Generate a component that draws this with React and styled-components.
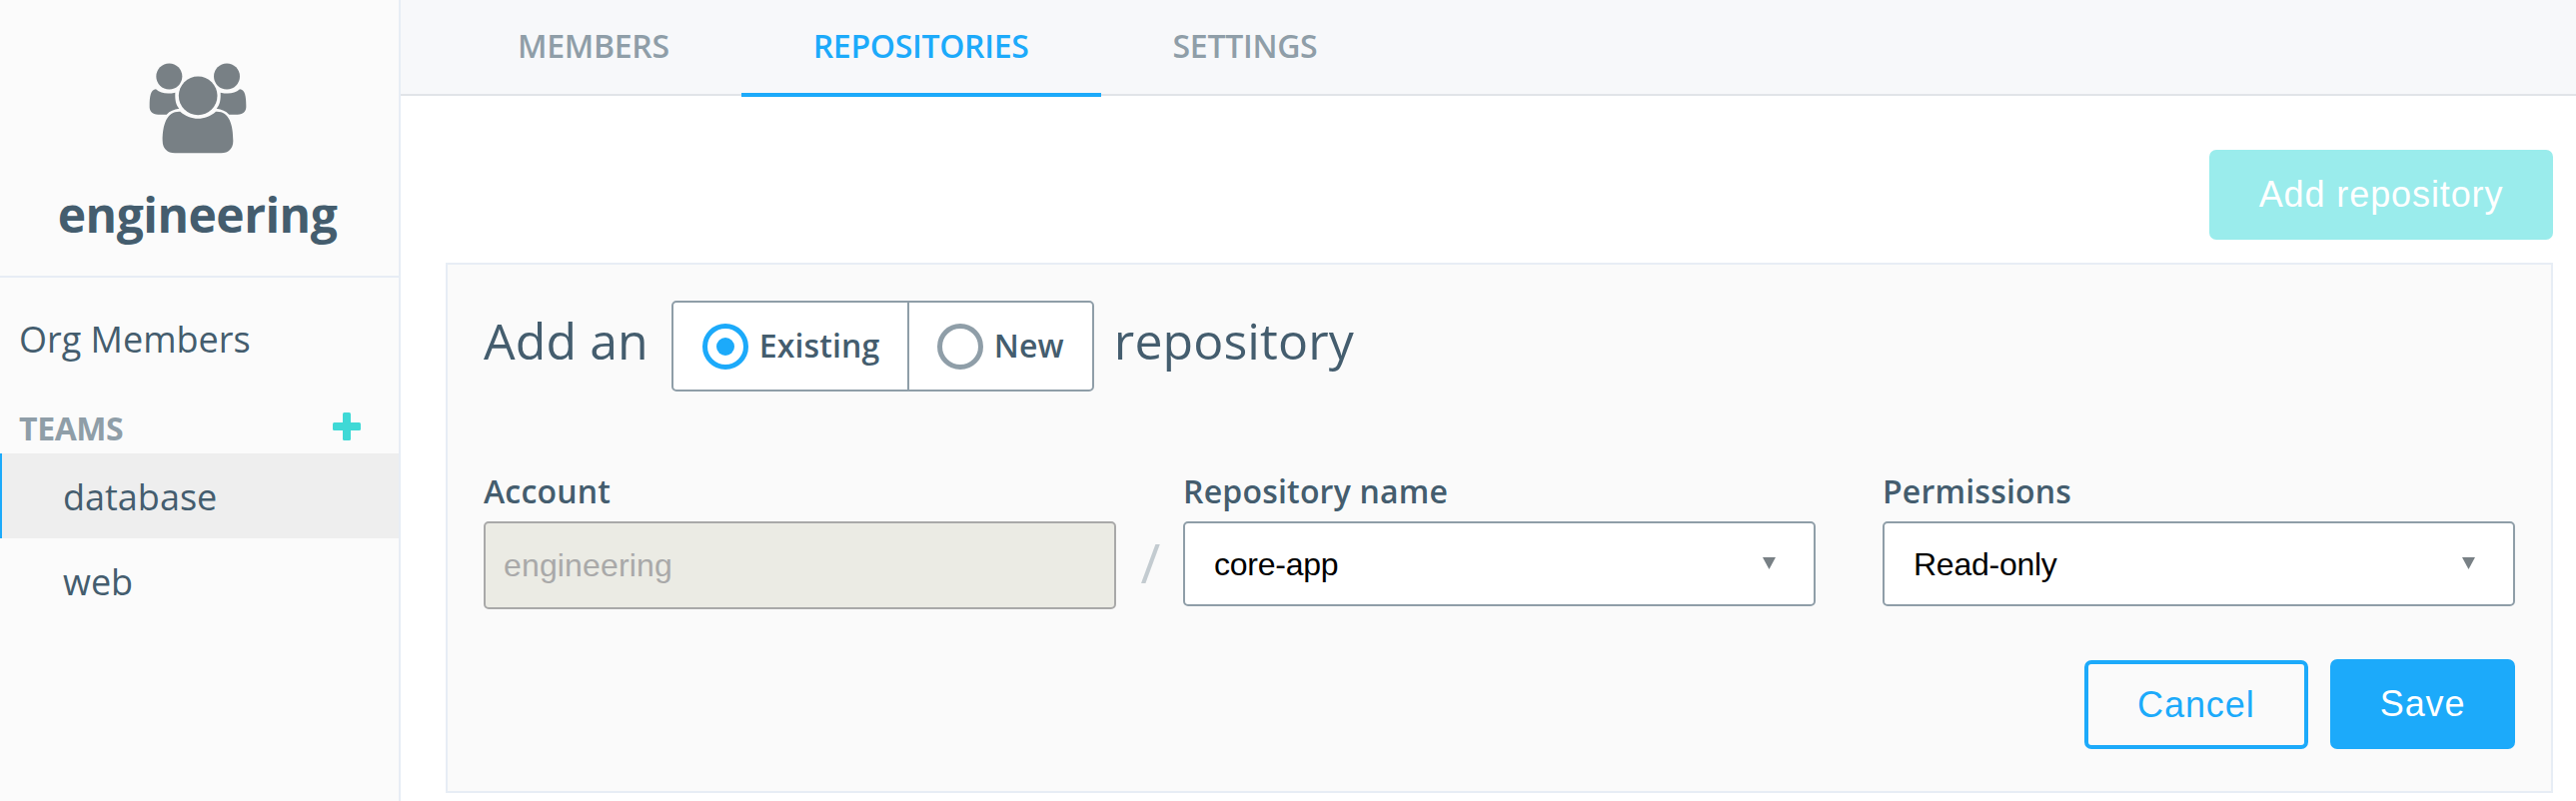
import React, { useState } from "react";
import styled, { createGlobalStyle } from "styled-components";

const GlobalStyle = createGlobalStyle`
  *, *::before, *::after { box-sizing: border-box; }
  body {
    margin: 0;
    background: #fff;
    color: #445d6e;
    font-family: "Open Sans", "Noto Sans", sans-serif;
  }
  button, input { margin: 0; }
`;

const Page = styled.div`
  display: flex;
  height: 802px;
  overflow: hidden;
`;

const Sidebar = styled.aside`
  flex: none;
  width: 401px;
  background: #fbfbfb;
  border-right: 2px solid #e7edf5;
`;

const OrgHeader = styled.header`
  display: flex;
  flex-direction: column;
  align-items: center;
  height: 278px;
  padding: 63px 3px 0 0;
  border-bottom: 2px solid #e7edf5;
`;

const OrgName = styled.h1`
  margin: 27px 0 0;
  padding-right: 1px;
  font-size: 48px;
  line-height: 68px;
  font-weight: 700;
  letter-spacing: -0.5px;
`;

const OrgLink = styled.a`
  display: block;
  margin-top: 37px;
  padding-left: 19px;
  font-size: 36px;
  line-height: 50px;
`;

const TeamsHeading = styled.div`
  display: flex;
  align-items: center;
  justify-content: space-between;
  height: 50px;
  margin-top: 39px;
  padding: 0 38px 0 19px;
  color: #8f9ea8;
  font-size: 32px;
  font-weight: 700;
  line-height: 50px;
  letter-spacing: -0.4px;
`;

const AddTeam = styled.svg`
  display: block;
  width: 28px;
  height: 28px;
  margin-top: -4px;
  fill: #3fd9d6;
`;

const TeamLink = styled.a`
  display: block;
  height: 85px;
  padding-left: 61px;
  border-left: 2px solid ${(p) => (p.$active ? "#1caafa" : "transparent")};
  background: ${(p) => (p.$active ? "#eee" : "transparent")};
  font-size: 36px;
  line-height: 88px;
`;

const Main = styled.main`
  flex: 1;
  min-width: 0;
`;

const Tabs = styled.nav`
  display: flex;
  height: 96px;
  padding-left: 45px;
  background: #f7f8fa;
  border-bottom: 2px solid #e1e4e8;
`;

const Tab = styled.a`
  height: 97px;
  padding: 0 72px;
  border-bottom: 4px solid ${(p) => (p.$active ? "#1caafa" : "transparent")};
  color: ${(p) => (p.$active ? "#1caafa" : "#8f9ea8")};
  font-size: 32px;
  line-height: 92px;
  font-weight: 600;
  letter-spacing: -0.3px;
`;

const Content = styled.div`
  padding: 54px 23px 0 45px;
`;

const Actions = styled.div`
  display: flex;
  justify-content: flex-end;
  align-items: flex-end;
  gap: 22px;
`;

const Button = styled.button`
  height: ${(p) => (p.$outlined ? 89 : 90)}px;
  padding: 0 49.6px;
  border: ${(p) => (p.$outlined ? "4px solid #1caafa" : "0")};
  border-radius: 7px;
  background: ${(p) => (p.$outlined ? "transparent" : p.$muted ? "#9aecec" : "#1caafa")};
  color: ${(p) => (p.$outlined ? "#1caafa" : "#fff")};
  font: 36px "Liberation Sans", Arial, sans-serif;
  letter-spacing: 0.9px;
`;

const Panel = styled.section`
  height: 531px;
  margin-top: 23px;
  padding: 36px 36px 0;
  border: 2px solid #e7edf5;
  background: #fafafa;
`;

const Sentence = styled.div`
  display: flex;
  align-items: flex-start;
  height: 170px;
  font-size: 50px;
  line-height: 80px;
  letter-spacing: 0.1px;
`;

const Choices = styled.div`
  display: flex;
  height: 91px;
  margin: 0 20px 0 23px;
  border: 2px solid #8f9ea8;
  border-radius: 5px;
  background: #fff;
`;

const Choice = styled.label`
  display: flex;
  align-items: center;
  gap: 11px;
  width: ${(p) => p.$width}px;
  padding: 0 0 2px 29px;
  font-size: 32px;
  line-height: 85px;
  font-weight: 600;

  & + & {
    padding-left: 28px;
    border-left: 2px solid #8f9ea8;
  }
`;

const Radio = styled.span`
  display: flex;
  align-items: center;
  justify-content: center;
  width: 46px;
  height: 46px;
  margin-top: 3px;
  border: 5px solid ${(p) => (p.$checked ? "#1caafa" : "#8f9ea8")};
  border-radius: 50%;

  &::after {
    content: "";
    width: 18px;
    height: 18px;
    border-radius: 50%;
    background: ${(p) => (p.$checked ? "#1caafa" : "transparent")};
  }
`;

const Fields = styled.div`
  display: grid;
  grid-template-columns: 633px 67px 633px 67px 633px;
  height: 189px;
`;

const Field = styled.div`
  display: flex;
  flex-direction: column;
`;

const FieldLabel = styled.label`
  height: 51px;
  font-size: 32px;
  line-height: 42px;
  font-weight: 600;
  letter-spacing: 0.2px;
`;

const AccountInput = styled.input`
  width: 100%;
  height: 88px;
  padding: 0 18px;
  border: 2px solid #a9a9a9;
  border-radius: 5px;
  background: #ebebe4;
  color: #a9a9a9;
  font: 32px "Liberation Sans", Arial, sans-serif;
  letter-spacing: 0.15px;
`;

const Select = styled.div`
  display: flex;
  align-items: center;
  justify-content: space-between;
  height: 85px;
  padding: 2px 38px 0 29px;
  border: 2px solid #8f9ea8;
  border-radius: 5px;
  background: #fff;
  color: #000;
  font: 32px "Liberation Sans", Arial, sans-serif;
  letter-spacing: -0.25px;
`;

const Arrow = styled.svg`
  display: block;
  width: 13px;
  height: 12px;
  margin-top: -4px;
  fill: #788085;
`;

const Slash = styled.span`
  padding: 55px 0 0 2px;
  color: #c3cbd0;
  font-size: 54px;
  line-height: 74px;
  text-align: center;
`;

function TeamIcon() {
  return (
    <svg width="98" height="91" viewBox="446 190 294 273" fill="#788085">
      <circle cx="507" cy="230.500" r="39" />
      <circle cx="680" cy="230.500" r="39" />
      <path d="M467 269C482 282 502 284 525 279C524 301 527 316 537 327C521 329 509 334 499 345H474C456 345 447 334 448 318C448 292 451 270 467 269Z" />
      <path d="M719 269C704 282 684 284 661 279C662 301 659 316 649 327C665 329 677 334 687 345H712C730 345 739 334 738 318C738 292 735 270 719 269Z" />
      <circle cx="593.500" cy="288.500" r="58" />
      <path d="M540 336C571 364 616 364 647 336C687 334 699 374 699 424C699 447 685 461 663 461H524C502 461 487 447 487 424C487 374 500 334 540 336Z" />
    </svg>
  );
}

function SelectField({ label, value }) {
  return (
    <Field>
      <FieldLabel>{label}</FieldLabel>
      <Select>
        {value}
        <Arrow viewBox="0 0 13 12"><path d="M0 0H13L6.500 12Z" /></Arrow>
      </Select>
    </Field>
  );
}

const choices = [
  { name: "Existing", width: 234 },
  { name: "New", width: 185 },
];

export default function App() {
  const [mode, setMode] = useState("Existing");
  return (
    <>
      <GlobalStyle />
      <Page>
        <Sidebar>
          <OrgHeader>
            <TeamIcon />
            <OrgName>engineering</OrgName>
          </OrgHeader>
          <OrgLink>Org Members</OrgLink>
          <TeamsHeading>
            TEAMS
            <AddTeam viewBox="0 0 28 28">
              <rect x="10" width="8" height="28" rx="1.500" />
              <rect y="10" width="28" height="8" rx="1.500" />
            </AddTeam>
          </TeamsHeading>
          <TeamLink $active>database</TeamLink>
          <TeamLink>web</TeamLink>
        </Sidebar>
        <Main>
          <Tabs>
            <Tab>MEMBERS</Tab>
            <Tab $active>REPOSITORIES</Tab>
            <Tab>SETTINGS</Tab>
          </Tabs>
          <Content>
            <Actions>
              <Button $muted>Add repository</Button>
            </Actions>
            <Panel>
              <Sentence>
                Add an
                <Choices>
                  {choices.map(({ name, width }) => (
                    <Choice key={name} $width={width} onClick={() => setMode(name)}>
                      <Radio $checked={mode === name} />
                      {name}
                    </Choice>
                  ))}
                </Choices>
                repository
              </Sentence>
              <Fields>
                <Field>
                  <FieldLabel>Account</FieldLabel>
                  <AccountInput disabled value="engineering" readOnly />
                </Field>
                <Slash>/</Slash>
                <SelectField label="Repository name" value="core-app" />
                <span />
                <SelectField label="Permissions" value="Read-only" />
              </Fields>
              <Actions>
                <Button $outlined>Cancel</Button>
                <Button>Save</Button>
              </Actions>
            </Panel>
          </Content>
        </Main>
      </Page>
    </>
  );
}
